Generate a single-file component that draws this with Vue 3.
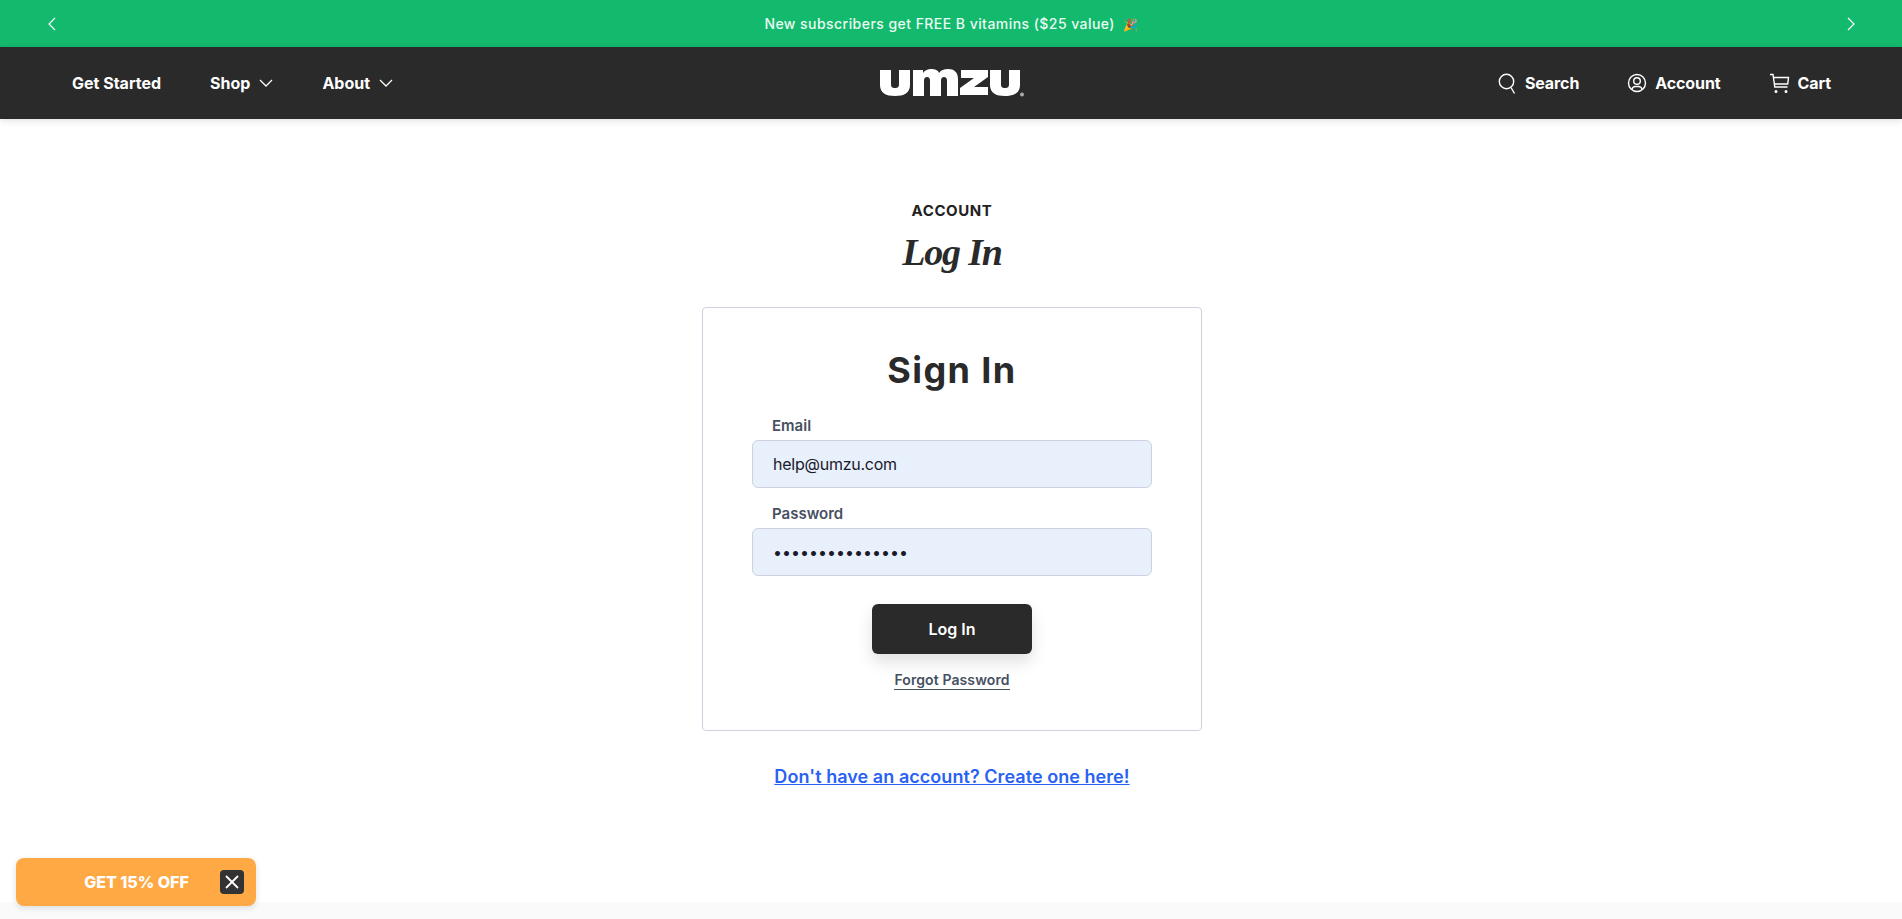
<script setup>
const leftLinks = [
  { label: 'Get Started', caret: false },
  { label: 'Shop', caret: true },
  { label: 'About', caret: true },
]
</script>

<template>
  <div class="page">
    <div class="promo">
      <svg class="promo-arrow" width="12" height="14" viewBox="0 0 12 14"><path d="M9 1 3 7l6 6" /></svg>
      <p class="promo-text">New subscribers get FREE B vitamins ($25 value) <span class="party">🎉</span></p>
      <svg class="promo-arrow" width="12" height="14" viewBox="0 0 12 14"><path d="m3 1 6 6-6 6" /></svg>
    </div>

    <header class="nav">
      <nav class="nav-left">
        <a v-for="link in leftLinks" :key="link.label" class="nav-link">
          {{ link.label }}
          <svg v-if="link.caret" class="caret" width="14" height="8" viewBox="0 0 14 8"><path d="m1 1 6 6 6-6" /></svg>
        </a>
      </nav>
      <svg class="logo" width="145" height="30" viewBox="0 0 145 30" aria-label="umzu">
        <path d="M1 2h11v14c0 3 1 4 4 4s4-1 4-4V2h11v15c0 8-6 11-15 11S1 25 1 17Z" />
        <path d="M34 2h10v3c2-3 5-4 8-4 4 0 7 1 8 4 2-3 5-4 9-4 6 0 10 3 10 10v17H68V13c0-3-1-4-3-4s-3 1-3 4v15H51V13c0-3-1-4-3-4s-3 1-3 4v15H34Z" />
        <path d="M82 2h27v7L95 19h14v8H81v-7l14-10H82Z" />
        <path d="M111 2h11v14c0 3 1 4 4 4s4-1 4-4V2h11v15c0 8-6 11-15 11s-15-3-15-11Z" />
        <circle cx="143" cy="26.500" r="2" class="logo-mark" />
      </svg>
      <nav class="nav-right">
        <a class="nav-link icon-link">
          <svg width="20" height="21" viewBox="0 0 20 21"><circle cx="9.500" cy="8.500" r="7.200" /><path d="m14 14.500 3.500 6" /></svg>
          Search
        </a>
        <a class="nav-link icon-link">
          <svg width="20" height="20" viewBox="0 0 20 20"><circle cx="10" cy="10" r="8.500" /><circle cx="10" cy="8" r="3.300" /><path d="M4.800 16.500c.6-2.300 2-3 3.700-3h3c1.700 0 3.100.7 3.700 3" /></svg>
          Account
        </a>
        <a class="nav-link icon-link">
          <svg width="21" height="21" viewBox="0 0 21 21"><path d="M1 1.500h3l1.800 12.500h12.700M4.400 4.500h15.100l-.8 6.500H5.300" /><circle cx="7" cy="18.500" r=".8" /><circle cx="17" cy="18.500" r=".8" /></svg>
          Cart
        </a>
      </nav>
    </header>

    <main class="main">
      <p class="eyebrow">ACCOUNT</p>
      <h1 class="page-title">Log In</h1>

      <form class="card" @submit.prevent>
        <h2 class="card-title">Sign In</h2>
        <label class="field-label">Email</label>
        <input class="field" type="email" value="help@umzu.com" />
        <label class="field-label">Password</label>
        <input class="field" type="password" value="passwordpasswor" />
        <button class="submit" type="submit">Log In</button>
        <a class="forgot">Forgot Password</a>
      </form>

      <a class="create">Don't have an account? Create one here!</a>
    </main>

    <div class="footer-edge"></div>

    <div class="discount">
      <span class="discount-text">GET 15% OFF</span>
      <span class="discount-close">
        <svg width="16" height="16" viewBox="0 0 16 16"><path d="m2 2 12 12M14 2 2 14" /></svg>
      </span>
    </div>
  </div>
</template>

<style>
html, body {
  margin: 0;
  background: #fff;
}
</style>

<style scoped>
* {
  box-sizing: border-box;
}
.page {
  height: 919px;
  overflow: hidden;
  position: relative;
  display: flex;
  flex-direction: column;
  font-family: Inter, "Liberation Sans", sans-serif;
  color: #2a2a2a;
}

.promo {
  height: 47px;
  background: #13b96d;
  display: flex;
  align-items: center;
  justify-content: space-between;
  padding: 0 45px 0 46px;
}
.promo-arrow path {
  fill: none;
  stroke: #fff;
  stroke-width: 1.200;
}
.promo-text {
  margin: 0;
  color: #e9fbf2;
  font-size: 14px;
  font-weight: 500;
  letter-spacing: 0.45px;
}
.party {
  font-size: 12px;
  margin-left: 4px;
}

.nav {
  height: 72px;
  background: #2a2a2a;
  box-shadow: 0 2px 6px rgba(0, 0, 0, 0.12);
  display: grid;
  grid-template-columns: 1fr auto 1fr;
  align-items: center;
  padding: 0 71px 0 72px;
  position: relative;
}
.nav-left,
.nav-right {
  display: flex;
  align-items: center;
}
.nav-left {
  gap: 49px;
}
.nav-right {
  gap: 48px;
  justify-content: flex-end;
}
.nav-link {
  display: flex;
  align-items: center;
  color: #fff;
  font-size: 16px;
  font-weight: 700;
}
.nav-right .nav-link {
  letter-spacing: -0.1px;
}
.caret {
  margin-left: 9px;
}
.caret path {
  fill: none;
  stroke: #fff;
  stroke-width: 1.300;
}
.icon-link {
  gap: 8px;
}
.icon-link svg {
  fill: none;
  stroke: #fff;
  stroke-width: 1.400;
}
.logo {
  display: block;
  fill: #fff;
  margin-right: 1px;
}
.logo-mark {
  fill: #aaa;
}

.main {
  display: flex;
  flex-direction: column;
  align-items: center;
  padding: 82px 0 0 2px;
}
.eyebrow {
  margin: 0;
  font-family: Inter, sans-serif;
  font-size: 15px;
  font-weight: 700;
  line-height: 20px;
  letter-spacing: 0.6px;
  color: #222;
}
.page-title {
  margin: 8px 0 0;
  font-family: "Liberation Serif", serif;
  font-style: italic;
  font-weight: 700;
  font-size: 38px;
  line-height: 46px;
  letter-spacing: -1.200px;
  color: #2a2a2a;
}
.card {
  width: 500px;
  height: 424px;
  margin-top: 32px;
  border: 1px solid #ced2de;
  border-radius: 4px;
  padding: 40px 49px 0;
  display: flex;
  flex-direction: column;
}
.card-title {
  margin: 0;
  text-align: center;
  font-size: 36px;
  font-weight: 700;
  line-height: 44px;
  letter-spacing: 1.400px;
  color: #2a2a2a;
}
.field-label {
  margin: 25px 0 5px 20px;
  font-size: 15px;
  font-weight: 600;
  line-height: 18px;
  color: #46505f;
}
.field {
  width: 100%;
  height: 48px;
  flex: none;
  border: 1px solid #ced2de;
  border-radius: 6px;
  background: #e8f0fb;
  padding: 0 20px;
  font-family: Inter, sans-serif;
  font-size: 16px;
  letter-spacing: -0.250px;
  color: #1a1a2a;
  outline: none;
}
.field[type="password"] {
  letter-spacing: 0;
}
.field + .field-label {
  margin-top: 17px;
}
.submit {
  width: 160px;
  height: 50px;
  flex: none;
  align-self: center;
  margin-top: 28px;
  border: 0;
  border-radius: 6px;
  background: #2a2a2a;
  color: #fff;
  font-family: Inter, sans-serif;
  font-size: 16px;
  font-weight: 600;
  box-shadow: 0 8px 16px rgba(0, 0, 0, 0.12);
}
.forgot {
  align-self: center;
  margin-top: 17px;
  font-size: 14px;
  font-weight: 600;
  line-height: 18px;
  letter-spacing: 0.1px;
  color: #46505f;
  border-bottom: 1px solid #46505f;
}
.create {
  margin-top: 35px;
  color: #2962f2;
  font-size: 18px;
  font-weight: 600;
  letter-spacing: 0.05px;
  text-decoration: underline;
}

.footer-edge {
  position: absolute;
  left: 0;
  right: 0;
  bottom: 0;
  height: 17px;
  background: #fafafa;
}

.discount {
  position: absolute;
  left: 16px;
  top: 858px;
  width: 240px;
  height: 48px;
  background: #ffa945;
  border-radius: 8px;
  box-shadow: 0 2px 6px rgba(0, 0, 0, 0.12);
  display: flex;
  align-items: center;
  justify-content: center;
}
.discount-text {
  color: #fff;
  font-size: 16px;
  font-weight: 800;
  margin-left: 1px;
}
.discount-close {
  position: absolute;
  right: 12px;
  top: 12px;
  width: 24px;
  height: 24px;
  background: #333;
  border-radius: 4px;
  display: flex;
  align-items: center;
  justify-content: center;
}
.discount-close path {
  fill: none;
  stroke: #fff;
  stroke-width: 1.800;
}
</style>
